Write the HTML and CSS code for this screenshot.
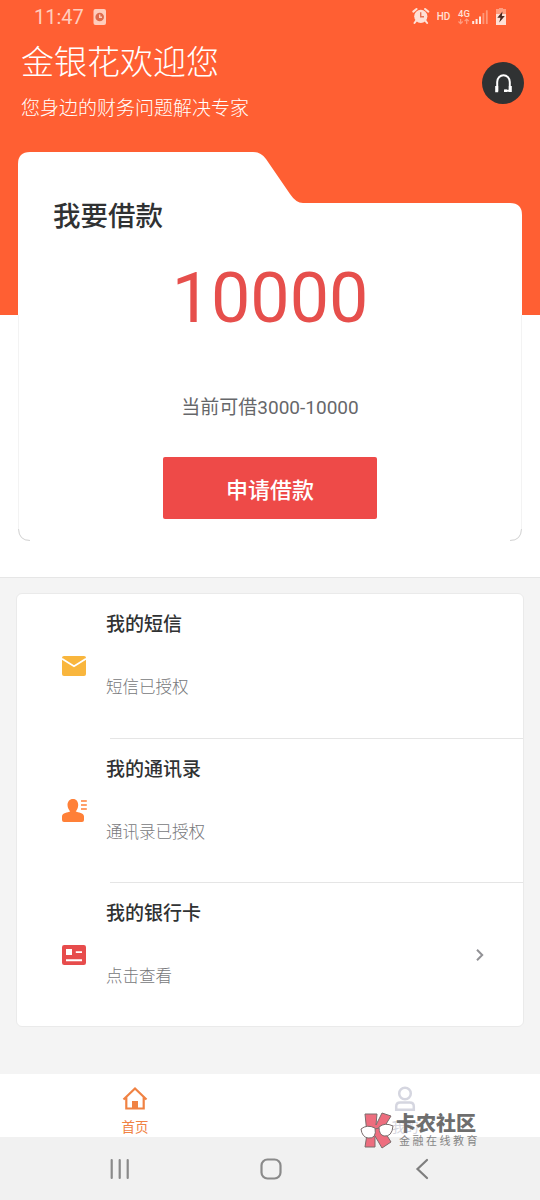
FILE: index.html
```html
<!DOCTYPE html>
<html lang="zh-CN">
<head>
<meta charset="utf-8">
<title>金银花</title>
<link rel="stylesheet" href="styles.css">
</head>
<body>
<div class="screen">
  <section class="hero">
    <div class="status">
      <span class="time">11:47</span>
      <svg class="note" width="14" height="18" viewBox="0 0 14 18"><rect x="0.5" y="1" width="12.5" height="16" rx="2" fill="#ffcdbd"/><circle cx="6.7" cy="9" r="4.3" fill="#de6b4c"/><path d="M6.7 6.5V9.2H9" fill="none" stroke="#ffcdbd" stroke-width="1.4"/></svg>
      <svg class="indicators" width="96" height="20" viewBox="0 0 96 20">
        <g fill="none" stroke="#ffe0d6" stroke-linecap="round"><path d="M1.3 4.6 4.5 2M16.3 4.6 13.1 2M4.2 13.7 2.5 16M13.4 13.7 15.1 16" stroke-width="2"/></g>
        <circle cx="8.8" cy="9.3" r="6.6" fill="#ffe0d6"/><path d="M8.7 5.3V9.7H12" fill="none" stroke="#e67355" stroke-width="1.4"/>
        <text class="hd" x="24.7" y="12.5">HD</text>
        <text class="net" x="46" y="9.5">4G</text>
        <path d="M48.6 12V16.4M46.5 14.5 48.6 16.7 50.7 14.5M54.7 17V12.2M52.6 14.2 54.7 12 56.8 14.2" fill="none" stroke="#ff9e82" stroke-width="1.2"/>
        <path d="M61.2 14V17M64.6 12V17M68 9.5V17" stroke="#ffe9e2" stroke-width="2"/><path d="M71.4 6V17M74.8 3.3V17" stroke="#ff9878" stroke-width="1.8"/>
        <path d="M84 2.5H87V1H91V2.5H94V18H84Z" fill="#ffe0d6"/><path d="M84 2.5H87V1H91V2.5H94V7H84Z" fill="#ff9c7d"/>
        <path d="M90.5 4.5 85.3 10.8H88.5L87.2 15.5 92.8 9H89.8Z" fill="#4c2920"/>
      </svg>
    </div>
    <header class="greeting">
      <div class="greeting-text">
        <h1>金银花欢迎您</h1>
        <p>您身边的财务问题解决专家</p>
      </div>
      <div class="support">
        <svg width="42" height="42" viewBox="0 0 42 42"><path d="M15.2 29V20A6.3 6.8 0 0 1 27.8 20V28.7H22.5" fill="none" stroke="#fff" stroke-width="2"/><path d="M13.2 24H16.2V30.2H13.2ZM26.8 24H29.8V30H26.8ZM22 27.5H25V30H22Z" fill="#fff"/></svg>
      </div>
    </header>
    <section class="loan">
      <svg class="loan-shape" width="504" height="390" viewBox="0 0 504 390"><path d="M12 0H235Q243 0 248 7L272 42Q278 51 285 51H492Q504 51 504 63V377Q504 389 492 389H12Q0 389 0 377V12Q0 0 12 0Z" fill="#fff"/><path d="M.5 163V377Q.5 388.5 12 388.5M503.500 163V377Q503.500 388.500 492 388.500" fill="none" stroke="#f3f3f3"/><path d="M.5 377Q1 388.500 12 388.500M503.500 377Q503 388.500 492 388.500" fill="none" stroke="#ccc" stroke-width=".8"/></svg>
      <h2>我要借款</h2>
      <div class="amount">10000</div>
      <p class="range">当前可借3000-10000</p>
      <button class="apply">申请借款</button>
    </section>
  </section>
  <main class="content">
    <div class="list">
      <div class="row">
        <svg class="icon" width="26" height="26" viewBox="0 0 26 26"><rect x="1" y="3" width="24" height="20" rx="2" fill="#f9b63d"/><path d="M1 5.700 13 13.300 25 5.700" fill="none" stroke="#fff" stroke-width="1.800"/></svg>
        <div class="label"><h3>我的短信</h3><p>短信已授权</p></div>
      </div>
      <div class="row">
        <svg class="icon" width="26" height="26" viewBox="0 0 26 26"><path d="M12 1C15.500 1 17.200 3.700 17.200 7C17.200 10 16 12 14.700 13.500C17 14.500 23 14.500 23 18.500V22Q23 24 21 24H3Q1 24 1 22V18.500C1 14.500 7 14.500 9.200 13.500C8 12 6.500 10 6.500 7C6.500 3.700 8.500 1 12 1Z" fill="#ff8038"/><path d="M20 3H25.800M20 7H25.800M20 11H25.800" stroke="#ff8038" stroke-width="1.600"/></svg>
        <div class="label"><h3>我的通讯录</h3><p>通讯录已授权</p></div>
      </div>
      <div class="row">
        <svg class="icon" width="26" height="26" viewBox="0 0 26 26"><rect x="1" y="3" width="24" height="20" rx="2.200" fill="#e74c4c"/><path d="M5 7H11V13H5ZM14.800 9.200H21V11H14.800ZM5 17.300H21V19.200H5Z" fill="#fff"/></svg>
        <div class="label"><h3>我的银行卡</h3><p>点击查看</p></div>
        <svg class="arrow" width="10" height="14" viewBox="0 0 10 14"><path d="M2 1.800 7.200 7 2 12.200" fill="none" stroke="#929296" stroke-width="2"/></svg>
      </div>
    </div>
  </main>
  <nav class="tabs">
    <div class="tab active">
      <svg width="26" height="26" viewBox="0 0 26 26"><path d="M1.500 13.500 13 2.500 24.500 13.500M4.300 11V22.500H21.700V11" fill="none" stroke="#f08243" stroke-width="2.200"/><path d="M10 15H16V23H10Z" fill="#f08243"/></svg>
      <span>首页</span>
    </div>
    <div class="tab">
      <svg width="26" height="26" viewBox="0 0 26 26"><circle cx="13" cy="7.500" r="5.800" fill="none" stroke="#d5d6e0" stroke-width="2.500"/><path d="M4.200 23.800V20.500Q4.200 16.500 8.200 16.500H17.800Q21.800 16.500 21.800 20.500V23.800Z" fill="none" stroke="#d5d6e0" stroke-width="2.500"/></svg>
      <span>我的</span>
    </div>
  </nav>
  <footer class="system-nav">
    <svg width="24" height="24" viewBox="0 0 24 24"><path d="M3.700 3V21M11.700 3V21M19.700 3V21" stroke="#8a8a8a" stroke-width="2.200" stroke-linecap="round"/></svg>
    <svg width="24" height="24" viewBox="0 0 24 24"><rect x="2.500" y="2.500" width="19" height="19" rx="6" fill="none" stroke="#8a8a8a" stroke-width="2.200"/></svg>
    <svg width="24" height="24" viewBox="0 0 24 24"><path d="M17 3 7.500 12 17 21" fill="none" stroke="#7e7e7e" stroke-width="2.200" stroke-linecap="round"/></svg>
  </footer>
  <div class="watermark">
    <svg width="36" height="38" viewBox="0 0 36 38"><g stroke="#7b6c6c" stroke-width="1" stroke-linejoin="round"><path d="M5 2H17L16 13 22 1 31 4 23 17 31 30 22 36 15 24 15 35H5L7 22Z" fill="#ed6d7e"/><path d="M1 17Q7 12 15 16Q17 27 8 26Q2 25 1 17ZM19 15Q25 10 33 14Q32 25 24 24Q19 23 19 15Z" fill="#fff"/><path d="M15 17 19 16" fill="none"/></g></svg>
    <div class="brand"><strong>卡农社区</strong><span>金融在线教育</span></div>
  </div>
</div>
</body>
</html>
```

FILE: styles.css
```css
* { box-sizing: border-box; }
body { margin: 0; font-family: "Noto Sans CJK SC", sans-serif; background: #f4f4f4; }
h1, h2, h3, p { margin: 0; }
svg { display: block; flex: none; }

.screen { position: relative; width: 540px; height: 1200px; display: flex; flex-direction: column; overflow: hidden; }

.hero { height: 578px; flex: none; background: linear-gradient(#ff5f33 315px, #fff 315px); border-bottom: 1px solid #e6e6e6; }
.status { height: 34px; display: flex; align-items: center; padding: 0 32px 0 34px; }
.time { width: 59px; font: 20px/24px Roboto, sans-serif; color: #ffcdbd; }
.indicators { margin-left: auto; }
.hd { font: 500 10px Roboto, sans-serif; fill: #ffe0d6; }
.net { font: 500 9.5px Roboto, sans-serif; fill: #ffe0d6; }

.greeting { height: 118px; display: flex; justify-content: space-between; padding: 0 16px 0 21px; color: #fff; }
.greeting h1 { padding-top: 2px; font-size: 33px; line-height: 48px; font-weight: 300; }
.greeting p { margin-top: 9px; font-size: 19px; line-height: 28px; font-weight: 300; }
.support { margin-top: 28px; width: 42px; height: 42px; border-radius: 50%; background: #303233; }

.loan { position: relative; width: 504px; height: 389px; margin: 0 18px; display: flex; flex-direction: column; align-items: center; }
.loan-shape { position: absolute; inset: 0; }
.loan > :not(.loan-shape) { position: relative; }
.loan h2 { align-self: flex-start; margin: 42px 0 0 35px; font-size: 27.500px; line-height: 40px; font-weight: 500; color: #303233; }
.amount { margin-top: 24px; font: 70px/80px Roboto, sans-serif; color: #e64f4c; }
.range { margin-top: 56px; font: 19px/28px Roboto, "Noto Sans CJK SC", sans-serif; color: #66676a; }
.apply { margin-top: 35px; width: 214px; height: 62px; padding: 0; border: 0; border-radius: 2px; background: #ee4a48; color: #fff; font: 500 22px/32px "Noto Sans CJK SC", sans-serif; }

.content { flex: 1; padding: 15px 16px 0; background: #f4f4f4; }
.list { height: 434px; border: 1px solid #eaeaea; border-radius: 6px; background: #fff; overflow: hidden; }
.row { position: relative; height: 144.500px; display: flex; align-items: center; padding: 0 38px 0 44px; }
.row + .row::before { content: ""; position: absolute; top: -1px; left: 93px; right: 0; height: 1px; background: #e5e5e5; }
.label { align-self: flex-start; margin-left: 19px; }
.label h3 { margin-top: 15px; font-size: 19px; line-height: 28px; font-weight: 500; color: #303233; }
.label p { margin-top: 37px; font-size: 16.500px; line-height: 24px; font-weight: 300; color: #77787b; }
.arrow { margin-left: auto; }

.tabs { height: 63px; display: flex; background: #fff; }
.tab { flex: 1; display: flex; flex-direction: column; align-items: center; padding-top: 12px; font-size: 13.500px; line-height: 20px; color: #d5d6e0; }
.tab span { margin-top: 4px; }
.tab.active { color: #f08243; }
.system-nav { height: 63px; display: flex; justify-content: space-between; align-items: center; padding: 0 106px 0 108px; background: #f1f1f1; }

.watermark { position: absolute; left: 360px; top: 1112px; display: flex; }
.brand { display: flex; flex-direction: column; color: #6e6e6e; }
.brand strong { font-size: 20px; line-height: 22px; font-weight: 900; white-space: nowrap; }
.brand span { margin: 0 0 0 3px; font-size: 11px; line-height: 12px; letter-spacing: 2.500px; white-space: nowrap; color: #858585; }
```
